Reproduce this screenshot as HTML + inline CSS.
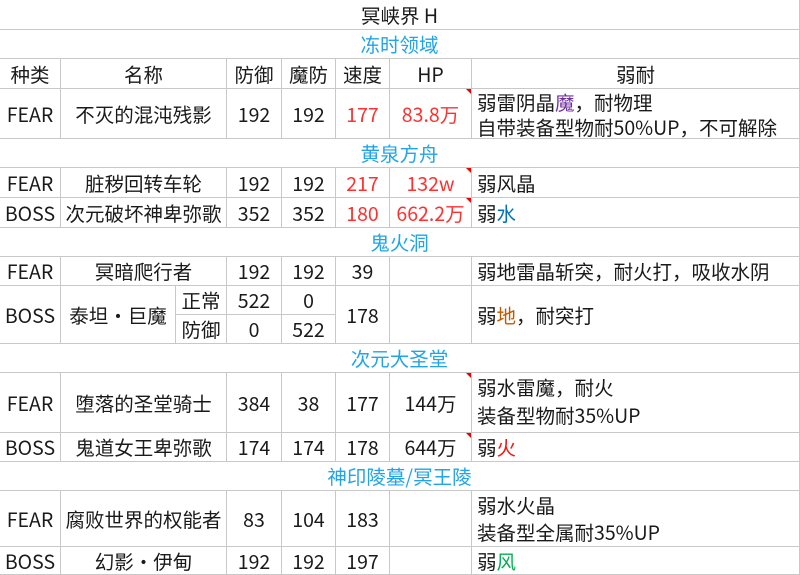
<!DOCTYPE html><html><head><meta charset="utf-8"><style>
body{margin:0;width:800px;height:574px;background:#fff;position:relative;overflow:hidden;font-family:"Noto Sans CJK SC","Liberation Sans",sans-serif;font-size:19.5px;color:#1a1a1a}
.c{position:absolute;box-sizing:border-box;border-right:1px solid #c8c8c8;border-bottom:1px solid #c8c8c8;display:flex;align-items:center;justify-content:center;white-space:nowrap;line-height:28px}
.l{justify-content:flex-start;padding-left:5px}
.s{color:#22a4e8}
.r{color:#ff3030}
.t::after{content:"";position:absolute;right:0;top:0;border-top:5px solid #e00;border-left:5px solid transparent}
.w{flex-direction:column;align-items:flex-start}
</style></head><body>
<div class="c" style="left:0;top:0;width:800px;height:30px">冥峡界 H</div>
<div class="c s" style="left:0;top:30px;width:800px;height:29px">冻时领域</div>
<div class="c" style="left:0;top:59px;width:61px;height:30px">种类</div>
<div class="c" style="left:61px;top:59px;width:166px;height:30px">名称</div>
<div class="c" style="left:227px;top:59px;width:55px;height:30px">防御</div>
<div class="c" style="left:282px;top:59px;width:54px;height:30px">魔防</div>
<div class="c" style="left:336px;top:59px;width:54px;height:30px">速度</div>
<div class="c" style="left:390px;top:59px;width:82px;height:30px">HP</div>
<div class="c" style="left:472px;top:59px;width:328px;height:30px">弱耐</div>

<div class="c" style="left:0;top:89px;width:61px;height:50px">FEAR</div>
<div class="c" style="left:61px;top:89px;width:166px;height:50px">不灭的混沌残影</div>
<div class="c" style="left:227px;top:89px;width:55px;height:50px">192</div>
<div class="c" style="left:282px;top:89px;width:54px;height:50px">192</div>
<div class="c r" style="left:336px;top:89px;width:54px;height:50px">177</div>
<div class="c r t" style="left:390px;top:89px;width:82px;height:50px">83.8万</div>
<div class="c l w" style="left:472px;top:89px;width:328px;height:50px;line-height:25px"><span>弱雷阴晶<span style="color:#7030a0">魔</span>，耐物理</span><span>自带装备型物耐50%UP，不可解除</span></div>

<div class="c s" style="left:0;top:139px;width:800px;height:29px">黄泉方舟</div>
<div class="c" style="left:0;top:168px;width:61px;height:30px">FEAR</div>
<div class="c" style="left:61px;top:168px;width:166px;height:30px">脏秽回转车轮</div>
<div class="c" style="left:227px;top:168px;width:55px;height:30px">192</div>
<div class="c" style="left:282px;top:168px;width:54px;height:30px">192</div>
<div class="c r" style="left:336px;top:168px;width:54px;height:30px">217</div>
<div class="c r t" style="left:390px;top:168px;width:82px;height:30px">132w</div>
<div class="c l" style="left:472px;top:168px;width:328px;height:30px">弱风晶</div>
<div class="c" style="left:0;top:198px;width:61px;height:30px">BOSS</div>
<div class="c" style="left:61px;top:198px;width:166px;height:30px">次元破坏神卑弥歌</div>
<div class="c" style="left:227px;top:198px;width:55px;height:30px">352</div>
<div class="c" style="left:282px;top:198px;width:54px;height:30px">352</div>
<div class="c r" style="left:336px;top:198px;width:54px;height:30px">180</div>
<div class="c r t" style="left:390px;top:198px;width:82px;height:30px">662.2万</div>
<div class="c l" style="left:472px;top:198px;width:328px;height:30px">弱<span style="color:#0070c0">水</span></div>

<div class="c s" style="left:0;top:228px;width:800px;height:29px">鬼火洞</div>
<div class="c" style="left:0;top:257px;width:61px;height:29px">FEAR</div>
<div class="c" style="left:61px;top:257px;width:166px;height:29px">冥暗爬行者</div>
<div class="c" style="left:227px;top:257px;width:55px;height:29px">192</div>
<div class="c" style="left:282px;top:257px;width:54px;height:29px">192</div>
<div class="c" style="left:336px;top:257px;width:54px;height:29px">39</div>
<div class="c" style="left:390px;top:257px;width:82px;height:29px"></div>
<div class="c l" style="left:472px;top:257px;width:328px;height:29px">弱地雷晶斩突，耐火打，吸收水阴</div>
<div class="c" style="left:0;top:286px;width:61px;height:58px">BOSS</div>
<div class="c" style="left:61px;top:286px;width:115px;height:58px">泰坦・巨魔</div>
<div class="c" style="left:176px;top:286px;width:51px;height:29px">正常</div>
<div class="c" style="left:176px;top:315px;width:51px;height:29px">防御</div>
<div class="c" style="left:227px;top:286px;width:55px;height:29px">522</div>
<div class="c" style="left:282px;top:286px;width:54px;height:29px">0</div>
<div class="c" style="left:227px;top:315px;width:55px;height:29px">0</div>
<div class="c" style="left:282px;top:315px;width:54px;height:29px">522</div>
<div class="c" style="left:336px;top:286px;width:54px;height:58px">178</div>
<div class="c" style="left:390px;top:286px;width:82px;height:58px"></div>
<div class="c l" style="left:472px;top:286px;width:328px;height:58px">弱<span style="color:#c05a00">地</span>，耐突打</div>

<div class="c s" style="left:0;top:344px;width:800px;height:29px">次元大圣堂</div>
<div class="c" style="left:0;top:373px;width:61px;height:60px">FEAR</div>
<div class="c" style="left:61px;top:373px;width:166px;height:60px">堕落的圣堂骑士</div>
<div class="c" style="left:227px;top:373px;width:55px;height:60px">384</div>
<div class="c" style="left:282px;top:373px;width:54px;height:60px">38</div>
<div class="c" style="left:336px;top:373px;width:54px;height:60px">177</div>
<div class="c t" style="left:390px;top:373px;width:82px;height:60px">144万</div>
<div class="c l w" style="left:472px;top:373px;width:328px;height:60px;line-height:28px"><span>弱水雷魔，耐火</span><span>装备型物耐35%UP</span></div>
<div class="c" style="left:0;top:433px;width:61px;height:29px">BOSS</div>
<div class="c" style="left:61px;top:433px;width:166px;height:29px">鬼道女王卑弥歌</div>
<div class="c" style="left:227px;top:433px;width:55px;height:29px">174</div>
<div class="c" style="left:282px;top:433px;width:54px;height:29px">174</div>
<div class="c" style="left:336px;top:433px;width:54px;height:29px">178</div>
<div class="c t" style="left:390px;top:433px;width:82px;height:29px">644万</div>
<div class="c l" style="left:472px;top:433px;width:328px;height:29px">弱<span style="color:#ff1010">火</span></div>

<div class="c s" style="left:0;top:462px;width:800px;height:29px">神印陵墓/冥王陵</div>
<div class="c" style="left:0;top:491px;width:61px;height:56px">FEAR</div>
<div class="c" style="left:61px;top:491px;width:166px;height:56px">腐败世界的权能者</div>
<div class="c" style="left:227px;top:491px;width:55px;height:56px">83</div>
<div class="c" style="left:282px;top:491px;width:54px;height:56px">104</div>
<div class="c" style="left:336px;top:491px;width:54px;height:56px">183</div>
<div class="c" style="left:390px;top:491px;width:82px;height:56px"></div>
<div class="c l w" style="left:472px;top:491px;width:328px;height:56px;line-height:27px"><span>弱水火晶</span><span>装备型全属耐35%UP</span></div>
<div class="c" style="left:0;top:547px;width:61px;height:28px">BOSS</div>
<div class="c" style="left:61px;top:547px;width:166px;height:28px">幻影・伊甸</div>
<div class="c" style="left:227px;top:547px;width:55px;height:28px">192</div>
<div class="c" style="left:282px;top:547px;width:54px;height:28px">192</div>
<div class="c" style="left:336px;top:547px;width:54px;height:28px">197</div>
<div class="c" style="left:390px;top:547px;width:82px;height:28px"></div>
<div class="c l" style="left:472px;top:547px;width:328px;height:28px">弱<span style="color:#00b050">风</span></div>
</body></html>
